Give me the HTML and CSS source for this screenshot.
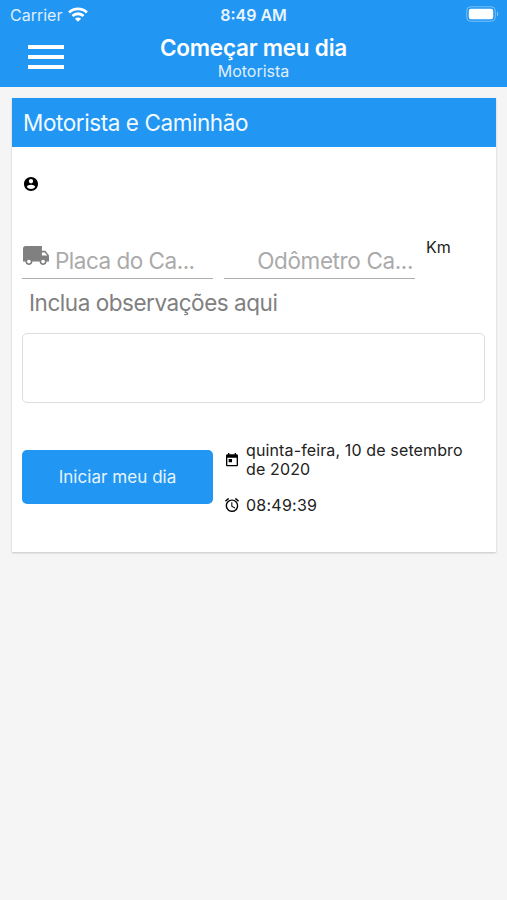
FILE: index.html
```
<!DOCTYPE html>
<html lang="pt-BR">
<head>
    <meta charset="UTF-8">
    <meta name="viewport" content="width=device-width, initial-scale=1.0">
    <title>Começar meu dia</title>
    <link rel="stylesheet" href="styles.css">
</head>
<body>
    <header class="header">
        <div class="status-bar">
            <div class="carrier">
                <span class="carrier-name">Carrier</span>
                <svg class="wifi" viewBox="0 0 20 15" fill="none" stroke="#fff" stroke-width="2.8">
                    <path d="M1.1 5.5a12.6 12.6 0 0 1 17.8 0"/>
                    <path d="M4.5 9a7.8 7.8 0 0 1 11 0"/>
                    <path d="M10 14.8 6.9 11.7a4.4 4.4 0 0 1 6.2 0z" fill="#fff" stroke="none"/>
                </svg>
            </div>
            <span class="clock">8:49 AM</span>
            <svg class="battery" viewBox="0 0 33 16">
                <rect x=".75" y=".75" width="28.5" height="14.5" rx="4" fill="none" stroke="#fff" stroke-opacity=".4"/>
                <rect x="2.8" y="2.8" width="24.4" height="10.4" rx="2.2" fill="#fff"/>
                <path d="M31 5.5c1.6.8 1.6 4.2 0 5z" fill="#fff" fill-opacity=".45"/>
            </svg>
        </div>
        <div class="toolbar">
            <button class="menu-button" aria-label="Menu">
                <span></span>
                <span></span>
                <span></span>
            </button>
            <div class="titles">
                <h1>Começar meu dia</h1>
                <p>Motorista</p>
            </div>
        </div>
    </header>

    <main class="card">
        <h2 class="card-title"><span>Motorista e Caminhão</span></h2>
        <div class="card-body">
            <div class="driver">
                <svg class="icon-driver" viewBox="2 2 20 20">
                    <path d="M12 2C6.48 2 2 6.48 2 12s4.48 10 10 10 10-4.48 10-10S17.52 2 12 2zm0 3c1.66 0 3 1.34 3 3s-1.34 3-3 3-3-1.34-3-3 1.34-3 3-3zm0 14.2c-2.5 0-4.71-1.28-6-3.22.03-1.99 4-3.08 6-3.08 1.99 0 5.97 1.09 6 3.08-1.29 1.94-3.5 3.22-6 3.22z"/>
                </svg>
            </div>

            <div class="fields">
                <div class="field">
                    <svg class="icon-truck" viewBox="1 4 22 16">
                        <path d="M20 8h-3V4H3c-1.1 0-2 .9-2 2v11h2c0 1.66 1.34 3 3 3s3-1.34 3-3h6c0 1.66 1.34 3 3 3s3-1.34 3-3h2v-5l-3-4zM6 18.5c-.83 0-1.5-.67-1.5-1.5s.67-1.5 1.5-1.5 1.5.67 1.5 1.5-.67 1.5-1.5 1.5zm13.5-9l1.96 2.5H17V9.5h2.5zm-1.5 9c-.83 0-1.5-.67-1.5-1.5s.67-1.5 1.5-1.5 1.5.67 1.5 1.5-.67 1.5-1.5 1.5z"/>
                    </svg>
                    <span class="placeholder plate">Placa do Ca...</span>
                </div>
                <div class="field field-right">
                    <span class="placeholder odometer">Odômetro Ca...</span>
                </div>
                <span class="unit">Km</span>
            </div>

            <label class="notes-label" for="notes"><span>Inclua observações aqui</span></label>
            <textarea class="notes" id="notes"></textarea>

            <div class="actions">
                <button class="start-button"><span>Iniciar meu dia</span></button>
                <div class="info">
                    <div class="info-row info-date">
                        <svg class="icon-small" viewBox="2 1 20 21">
                            <path d="M19 3h-1V1h-2v2H8V1H6v2H5c-1.11 0-1.99.9-1.99 2L3 19c0 1.1.89 2 2 2h14c1.1 0 2-.9 2-2V5c0-1.1-.9-2-2-2zm0 16H5V8h14v11zM7 10h5v5H7z"/>
                        </svg>
                        <span class="date">quinta-feira, 10 de setembro<br>de 2020</span>
                    </div>
                    <div class="info-row">
                        <svg class="icon-small" viewBox="2 2 20 20">
                            <path d="M22 5.72l-4.6-3.86-1.29 1.53 4.6 3.86L22 5.72zM7.88 3.39L6.6 1.86 2 5.71l1.29 1.53 4.59-3.85zM12.5 8H11v6l4.75 2.85.75-1.23-4-2.37V8zM12 4c-4.97 0-9 4.03-9 9s4.02 9 9 9a9 9 0 0 0 0-18zm0 16c-3.87 0-7-3.13-7-7s3.13-7 7-7 7 3.13 7 7-3.13 7-7 7z"/>
                        </svg>
                        <span class="time">08:49:39</span>
                    </div>
                </div>
            </div>
        </div>
    </main>
</body>
</html>
```
FILE: styles.css
```
/* General Styles */
* {
    box-sizing: border-box;
}

body {
    margin: 0;
    min-height: 100vh;
    background: #f5f5f5;
    color: #222;
    font-family: Inter, 'Liberation Sans', sans-serif;
}

h1, h2, p {
    margin: 0;
    font-weight: 400;
}

svg {
    display: block;
    flex: none;
}

button {
    border: none;
    font-family: inherit;
    cursor: pointer;
}

/* Header */
.header {
    height: 87px;
    background: #2196f3;
    color: #fff;
}

.status-bar {
    display: grid;
    grid-template-columns: 1fr auto 1fr;
    align-items: center;
    height: 29px;
    padding: 0 8px 0 10px;
    font-size: 16px;
}

.carrier {
    display: flex;
    align-items: center;
    gap: 6px;
}

.carrier-name {
    opacity: 0.85;
}

.wifi {
    width: 20px;
    height: 15px;
}

.clock {
    margin-right: 2px;
    font-weight: 600;
    opacity: 0.9;
}

.battery {
    justify-self: end;
    width: 33px;
    height: 16px;
    margin-top: -1px;
}

.toolbar {
    display: grid;
    grid-template-columns: 64px 1fr 64px;
    height: 58px;
}

.menu-button {
    display: flex;
    flex-direction: column;
    gap: 6px;
    width: 64px;
    padding: 16px 0 0 28px;
    background: none;
}

.menu-button span {
    width: 36px;
    height: 4px;
    background: #fff;
}

.titles {
    padding-top: 5px;
    text-align: center;
}

.titles h1 {
    font-size: 22.5px;
    line-height: 28px;
    font-weight: 600;
    letter-spacing: -0.24px;
}

.titles p {
    margin-top: -1px;
    font-size: 16px;
    line-height: 20px;
    opacity: 0.85;
}

/* Card */
.card {
    height: 454px;
    margin: 11px 11px 0 12px;
    background: #fff;
    box-shadow: 0 1px 2px rgba(0, 0, 0, 0.2);
}

.card-title {
    height: 49px;
    padding-left: 11px;
    background: #2196f3;
    color: #f2faff;
    font-size: 22.5px;
    line-height: 50px;
    letter-spacing: -0.42px;
}

.card-body {
    padding: 30px 11px 0 10px;
}

.icon-driver {
    width: 14px;
    height: 14px;
    margin-left: 2px;
}

/* Fields */
.fields {
    display: grid;
    grid-template-columns: 191px 191px 1fr;
    gap: 11px;
    margin-top: 47px;
}

.field {
    display: flex;
    height: 41px;
    padding-left: 1px;
    border-bottom: 1px solid #adadad;
    color: #aaa;
    font-size: 22.5px;
    line-height: 28px;
}

.field-right {
    justify-content: flex-end;
    padding-right: 2px;
}

.icon-truck {
    width: 26px;
    height: 19px;
    margin: 8px 6px 0 0;
    fill: #808080;
}

.placeholder {
    margin-top: 9px;
    white-space: nowrap;
}

.plate {
    letter-spacing: -0.5px;
}

.odometer {
    letter-spacing: -0.38px;
}

.unit {
    margin-top: -1px;
    font-size: 16px;
    line-height: 20px;
}

/* Notes */
.notes-label {
    display: block;
    height: 54px;
    padding: 10px 0 0 7px;
    color: #808080;
    font-size: 22.5px;
    line-height: 28px;
    letter-spacing: -0.46px;
}

.notes {
    display: block;
    width: 100%;
    height: 70px;
    border: 1px solid #ddd;
    border-radius: 5px;
    outline: none;
    resize: none;
}

/* Actions */
.actions {
    display: grid;
    grid-template-columns: 191px 1fr;
    gap: 11px;
    align-items: start;
    margin-top: 47px;
}

.start-button {
    height: 54px;
    padding: 0;
    border-radius: 5px;
    background: #2196f3;
    color: #e6f4ff;
    font-size: 17px;
    letter-spacing: 0.05px;
}

.info {
    margin-top: -9px;
    padding-left: 1px;
    font-size: 16px;
    line-height: 19px;
    letter-spacing: 0.13px;
}

.info-row {
    display: flex;
    align-items: center;
    gap: 7px;
    white-space: nowrap;
}

.info-date {
    margin-bottom: 17px;
}

.time {
    letter-spacing: 0.25px;
}

.icon-small {
    width: 14px;
    height: 14px;
    margin-top: -1px;
}
```
